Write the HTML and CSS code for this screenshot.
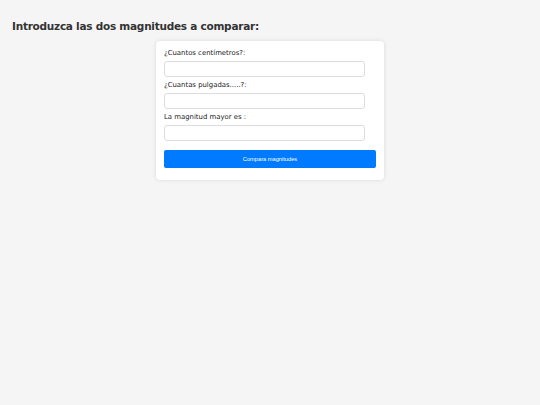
FILE: index.html
```html
<!DOCTYPE html>
<html lang="es">
<head>
<meta charset="utf-8">
<link rel="stylesheet" href="styles.css">
</head>
<body>
<h2 class="title">Introduzca las dos magnitudes a comparar:</h2>
<form class="card">
  <label class="lbl">¿Cuantos centímetros?:</label>
  <input class="field" type="text">
  <label class="lbl">¿Cuantas pulgadas.....?:</label>
  <input class="field" type="text">
  <label class="lbl">La magnitud mayor es :</label>
  <input class="field" type="text">
  <button class="btn" type="button">Compara magnitudes</button>
</form>
</body>
</html>
```

FILE: styles.css
```css
html, body {
  margin: 0;
  padding: 0;
  background: #f5f5f5;
}
body {
  font-family: "DejaVu Sans", Verdana, sans-serif;
  color: #222;
  padding: 10px 12px;
}
.title {
  font-size: 10.5px;
  letter-spacing: -0.25px;
  font-weight: bold;
  color: #333;
  margin: 10px 0 8px 0;
  line-height: 13px;
}
.card {
  width: 212px;
  margin: 0 auto;
  background: #fff;
  border-radius: 4px;
  box-shadow: 0 0 4px rgba(0,0,0,0.12);
  padding: 7px 8px 12px 8px;
  display: flex;
  flex-direction: column;
}
.lbl {
  font-size: 6.9px;
  line-height: 10px;
  color: #1a1a1a;
  margin-bottom: 3px;
}
.field {
  width: 95%;
  box-sizing: border-box;
  height: 16px;
  border: 1px solid #ddd;
  border-radius: 3px;
  margin: 0 0 3px 0;
  padding: 0;
  background: #fff;
}
.btn {
  margin-top: 6px;
  height: 18px;
  width: 100%;
  border: none;
  border-radius: 2px;
  background: #007bff;
  color: #fff;
  font-family: "Liberation Sans", Arial, sans-serif;
  font-size: 5.7px;
  padding: 0;
}
```
